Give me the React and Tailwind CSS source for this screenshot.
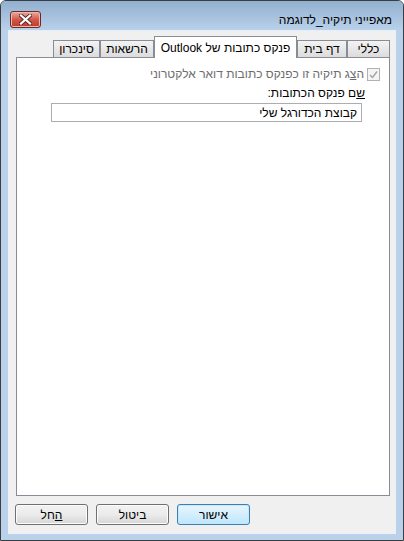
import React from "react"

const font = { fontFamily: '"Liberation Sans", "DejaVu Sans", sans-serif' }

function Tab({ label, width, selected }) {
  if (selected) {
    return (
      <div
        className={`${width} relative z-10 -mb-px flex h-[22px] items-start justify-center border border-b-0 border-[#898c95] bg-white pt-[2px] text-[12px] text-black`}
      >
        {label}
      </div>
    )
  }
  return (
    <div
      className={`${width} flex h-[17px] items-center justify-center border border-b-0 border-[#898c95] bg-gradient-to-b from-[#f3f3f3] to-[#dcdcdc] text-[12px] text-black`}
    >
      {label}
    </div>
  )
}

function Button({ children, focused }) {
  return (
    <button
      className={`flex h-[21px] w-[73px] items-center justify-center rounded-[3px] border text-[12px] text-black ${
        focused
          ? "border-[#3c7fb1] bg-gradient-to-b from-[#eaf6fd] to-[#bee6fd] shadow-[inset_0_0_0_1px_#c5e8fb]"
          : "border-[#707070] bg-gradient-to-b from-[#f2f2f2] via-[#ebebeb] to-[#d6d6d6] shadow-[inset_0_0_0_1px_#fcfcfc]"
      }`}
    >
      {children}
    </button>
  )
}

export default function App() {
  return (
    <div className="h-[541px] w-[404px] bg-white" style={font}>
      <div
        dir="rtl"
        className="flex h-[541px] w-[404px] flex-col rounded-t-[6px] border border-[#3c3c3c] bg-[#b9d1ea] px-[7px] pb-[6px]"
      >
        {/* title bar */}
        <div className="-mx-[7px] flex h-[29px] items-start justify-between rounded-t-[5px] bg-gradient-to-b from-[#92b0d1] to-[#b9d1ea] pl-[9px] pr-[11px]">
          <div className="mt-[11px] text-[12px] leading-[16px] text-black">מאפייני תיקיה_לדוגמה</div>
          <div className="mt-[10px] flex h-[17px] w-[31px] items-center justify-center rounded-[3px] border border-[#6b2a22] bg-gradient-to-b from-[#e9a99c] via-[#d2574a] to-[#c0392b] shadow-[inset_0_0_0_1px_#f0b6ab]">
            <svg width="13" height="11" viewBox="0 0 13 11">
              <path
                d="M2 1.5 L11 9.5 M11 1.5 L2 9.5"
                stroke="#5a2a25"
                strokeWidth="4"
                strokeLinecap="square"
              />
              <path
                d="M2 1.5 L11 9.5 M11 1.5 L2 9.5"
                stroke="#ffffff"
                strokeWidth="2.2"
                strokeLinecap="square"
              />
            </svg>
          </div>
        </div>

        {/* client area */}
        <div className="flex flex-1 flex-col border-t border-[#e6eef8] bg-[#f0f0f0] pl-[8px] pr-[6px]">
          <div className="mt-[5px] flex h-[21px] items-end">
            <Tab label="כללי" width="w-[43px]" />
            <Tab label="דף בית" width="w-[50px]" />
            <Tab label="פנקס כתובות של Outlook" width="w-[143px]" selected />
            <Tab label="הרשאות" width="w-[54px]" />
            <Tab label="סינכרון" width="w-[47px]" />
          </div>

          <div className="flex h-[439px] flex-col border border-[#898c95] bg-white">
            <div className="mt-[8px] flex items-center gap-[3px] pr-[9px]">
              <div className="flex h-[13px] w-[13px] items-center justify-center border border-[#b1b1b1] bg-[#f4f4f4]">
                <svg width="9" height="9" viewBox="0 0 9 9">
                  <path d="M1 5 L3.5 7.5 L8 1.5" fill="none" stroke="#a0a0a0" strokeWidth="1.3" />
                </svg>
              </div>
              <div className="text-[12px] leading-[16px] text-[#6d6d6d]">
                ה<span className="underline">צ</span>ג תיקיה זו כפנקס כתובות דואר אלקטרוני
              </div>
            </div>

            <div className="mt-[3px] pr-[24px] text-[12px] leading-[16px] text-black">
              <span className="underline">ש</span>ם פנקס הכתובות:
            </div>

            <div className="mr-[27px] mt-[2px] flex h-[19px] w-[311px] items-center border border-[#abadb3] bg-white pr-[4px] text-[12px] text-black">
              קבוצת הכדורגל שלי
            </div>
          </div>

          <div className="-ml-px mt-[8px] flex justify-end gap-[8px]">
            <Button focused>אישור</Button>
            <Button>ביטול</Button>
            <Button>
              <span className="underline">ה</span>חל
            </Button>
          </div>
        </div>
      </div>
    </div>
  )
}
